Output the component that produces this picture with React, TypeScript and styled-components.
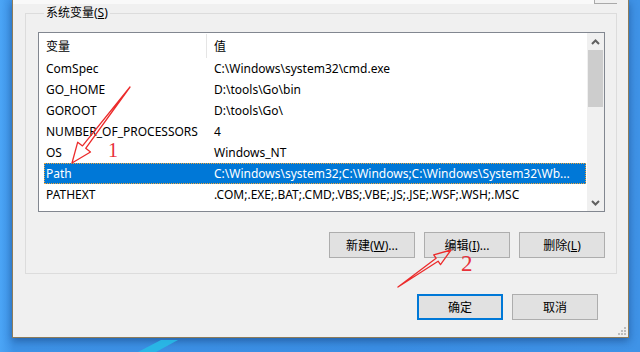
import styled, { createGlobalStyle } from 'styled-components';

const GlobalStyle = createGlobalStyle`
  html, body {
    margin: 0;
    padding: 0;
  }
  body {
    overflow: hidden;
    font-family: "Noto Sans", "Noto Sans CJK SC", sans-serif;
    font-size: 12px;
    color: #000;
  }
`;

const UI_FONT = `"Noto Sans", "Noto Sans CJK SC", sans-serif`;

const variables = [
  { name: 'ComSpec', value: 'C:\\Windows\\system32\\cmd.exe' },
  { name: 'GO_HOME', value: 'D:\\tools\\Go\\bin' },
  { name: 'GOROOT', value: 'D:\\tools\\Go\\' },
  { name: 'NUMBER_OF_PROCESSORS', value: '4' },
  { name: 'OS', value: 'Windows_NT' },
  {
    name: 'Path',
    value: 'C:\\Windows\\system32;C:\\Windows;C:\\Windows\\System32\\Wb...',
    selected: true,
  },
  { name: 'PATHEXT', value: '.COM;.EXE;.BAT;.CMD;.VBS;.VBE;.JS;.JSE;.WSF;.WSH;.MSC' },
];

const Desktop = styled.div`
  position: relative;
  width: 640px;
  height: 352px;
  box-sizing: border-box;
  padding: 0 11px 0 12px;
  overflow: hidden;
  background:
    linear-gradient(90deg, #4ba5f6 0px, #3d92e6 14px, #3a8ee4 60%, #3f93e7 100%);
`;

const Dialog = styled.div`
  width: 617px;
  height: 338px;
  box-sizing: border-box;
  background: #f0f0f0;
  border: 1px solid #8c7c5c;
  border-top: none;
  box-shadow: 0 3px 8px rgba(10, 40, 90, 0.45);
  display: flex;
  flex-direction: column;
`;

const TopStrip = styled.div`
  display: flex;
  height: 4px;
`;

const TopBlank = styled.div`
  width: 581px;
  background: #f9f9f9;
`;

const TopButtonEdge = styled.div`
  width: 22px;
  border-left: 1px solid #a9a9a9;
  border-bottom: 1px solid #a9a9a9;
`;

const Group = styled.fieldset`
  margin: 1px 11px 0 12px;
  padding: 11px 11px 15px 12px;
  border: 1px solid #dcdcdc;
  min-inline-size: 0;
`;

const GroupLabel = styled.legend`
  margin-left: 6px;
  padding: 0 2px;
  line-height: 16px;
  font-family: ${UI_FONT};
  font-size: 12px;
`;

const ListBox = styled.div`
  height: 180px;
  box-sizing: border-box;
  border: 1px solid #828790;
  background: #fff;
  display: flex;
  overflow: hidden;
`;

const ListContent = styled.div`
  flex: 1;
  padding-left: 5px;
  min-width: 0;
`;

const HeaderRow = styled.div`
  display: grid;
  grid-template-columns: 163px 1fr;
  height: 25px;
  align-items: stretch;
`;

const HeaderCell = styled.div<{ $divider?: boolean }>`
  display: flex;
  align-items: center;
  padding-left: ${(p) => (p.$divider ? '2px' : '7px')};
  border-right: ${(p) => (p.$divider ? '1px solid #e5e5e5' : 'none')};
  margin: 1px 0 0;
`;

const Row = styled.div<{ $selected?: boolean }>`
  display: grid;
  grid-template-columns: 163px 1fr;
  height: 21px;
  align-items: center;
  white-space: nowrap;
  background: ${(p) => (p.$selected ? '#0078d7' : 'transparent')};
  color: ${(p) => (p.$selected ? '#fff' : '#000')};
  outline: ${(p) => (p.$selected ? '1px dotted #f0a53a' : 'none')};
  outline-offset: -1px;
`;

const Cell = styled.div<{ $first?: boolean }>`
  padding-left: ${(p) => (p.$first ? '2px' : '7px')};
  overflow: hidden;
`;

const ScrollBar = styled.div`
  width: 17px;
  background: #f0f0f0;
  border-left: 1px solid #fff;
  display: flex;
  flex-direction: column;
`;

const ScrollArrow = styled.div`
  height: 17px;
  display: flex;
  align-items: center;
  justify-content: center;
`;

const ScrollTrack = styled.div`
  flex: 1;
  padding: 0 1px;
`;

const ScrollThumb = styled.div`
  height: 57px;
  background: #cdcdcd;
`;

const ButtonRow = styled.div`
  display: flex;
  justify-content: flex-end;
  gap: 9px;
  margin-top: 20px;
`;

const Button = styled.button<{ $default?: boolean }>`
  width: 86px;
  height: 26px;
  box-sizing: border-box;
  padding: 0;
  background: #e1e1e1;
  border: ${(p) => (p.$default ? '2px solid #0078d7' : '1px solid #adadad')};
  font-family: ${UI_FONT};
  font-size: 12px;
  color: #000;
`;

const Footer = styled.div`
  display: flex;
  justify-content: flex-end;
  align-items: flex-start;
  gap: 9px;
  margin-top: 20px;
  padding-right: 1px;
`;

const Grip = styled.svg`
  margin: 33px 0 0 11px;
  width: 9px;
  height: 9px;
`;

const Overlay = styled.svg`
  position: absolute;
  left: 0;
  top: 0;
  width: 640px;
  height: 352px;
  pointer-events: none;
`;

const Chevron = ({ down }: { down?: boolean }) => (
  <svg width="9" height="6" viewBox="0 0 9 6">
    <path
      d={down ? 'M1 1 L4.5 4.5 L8 1' : 'M1 5 L4.5 1.5 L8 5'}
      fill="none"
      stroke="#606060"
      strokeWidth="2"
    />
  </svg>
);

export default function App() {
  return (
    <>
      <GlobalStyle />
      <Desktop>
        <Dialog>
          <TopStrip>
            <TopBlank />
            <TopButtonEdge />
          </TopStrip>
          <Group>
            <GroupLabel>
              系统变量(<u>S</u>)
            </GroupLabel>
            <ListBox>
              <ListContent>
                <HeaderRow>
                  <HeaderCell $divider>变量</HeaderCell>
                  <HeaderCell>值</HeaderCell>
                </HeaderRow>
                {variables.map((v) => (
                  <Row key={v.name} $selected={v.selected}>
                    <Cell $first>{v.name}</Cell>
                    <Cell>{v.value}</Cell>
                  </Row>
                ))}
              </ListContent>
              <ScrollBar>
                <ScrollArrow>
                  <Chevron />
                </ScrollArrow>
                <ScrollTrack>
                  <ScrollThumb />
                </ScrollTrack>
                <ScrollArrow>
                  <Chevron down />
                </ScrollArrow>
              </ScrollBar>
            </ListBox>
            <ButtonRow>
              <Button>
                新建(<u>W</u>)...
              </Button>
              <Button>
                编辑(<u>I</u>)...
              </Button>
              <Button>
                删除(<u>L</u>)
              </Button>
            </ButtonRow>
          </Group>
          <Footer>
            <Button $default>确定</Button>
            <Button>取消</Button>
            <Grip viewBox="0 0 9 9">
              <g fill="#bdbdbd">
                <rect x="6" y="0" width="2" height="2" />
                <rect x="3" y="3" width="2" height="2" />
                <rect x="6" y="3" width="2" height="2" />
                <rect x="0" y="6" width="2" height="2" />
                <rect x="3" y="6" width="2" height="2" />
                <rect x="6" y="6" width="2" height="2" />
              </g>
            </Grip>
          </Footer>
        </Dialog>
        <Overlay viewBox="0 0 640 352">
          <polygon points="138,352 156,352 178,340 161,340" fill="#27bde6" opacity="0.85" />
          <g fill="none" stroke="#ec2b2b" strokeWidth="1.3" strokeLinejoin="round">
            <polygon points="130,87 85.7,148.3 90.5,152 72,163 77.7,142.2 82.5,145.9" />
            <polygon points="398,287 438.1,261.2 440.5,264.6 451,250 433.7,254.8 436.1,258.2" />
          </g>
          <g fill="#e8303a" fontFamily='"Liberation Serif", serif'>
            <text x="108" y="157" fontSize="20">1</text>
            <text x="461" y="271" fontSize="23">2</text>
          </g>
        </Overlay>
      </Desktop>
    </>
  );
}
